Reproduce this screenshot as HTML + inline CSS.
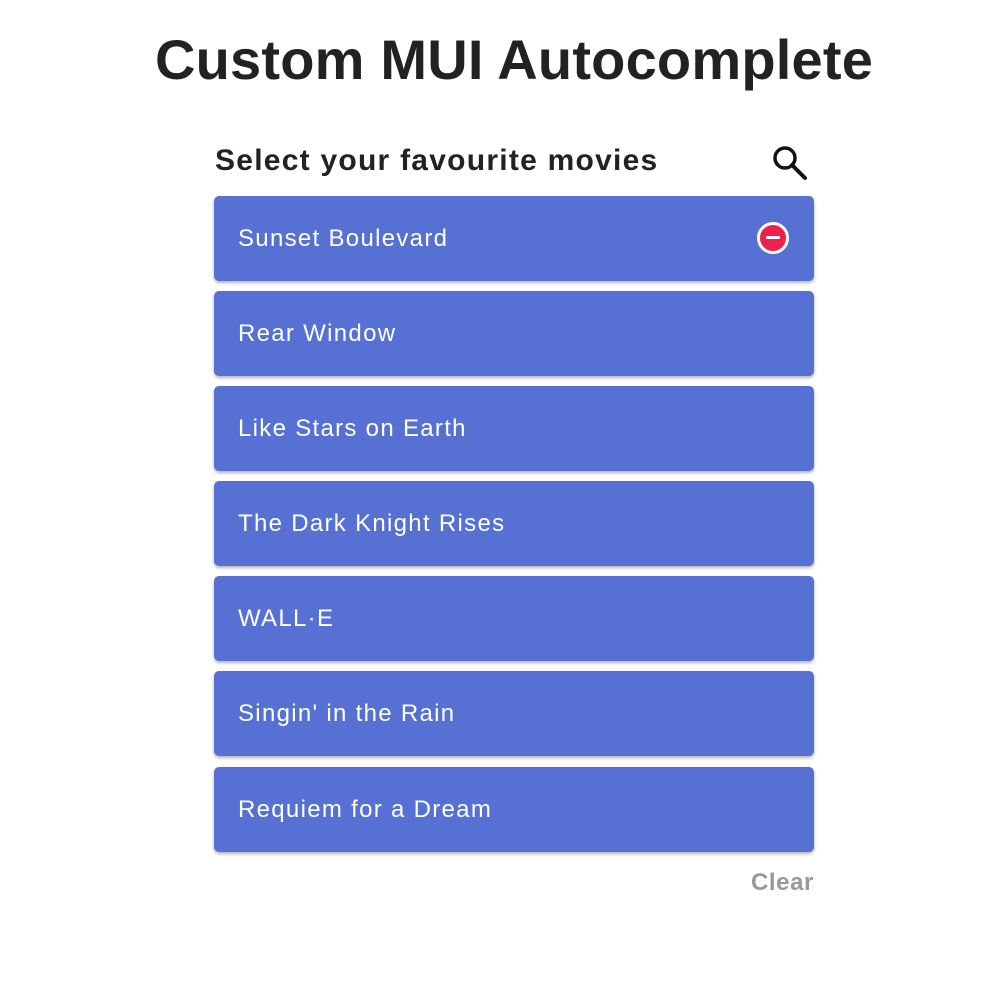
<!DOCTYPE html>
<html><head><style>
body{margin:0;width:1000px;height:1000px;background:#fff;font-family:"Liberation Sans",Arial,sans-serif;position:relative;overflow:hidden}
h1{position:absolute;top:27px;left:14px;width:1000px;margin:0;text-align:center;font-size:56px;font-weight:bold;color:#222;line-height:66px;letter-spacing:0.2px}
.label{position:absolute;left:215px;top:143px;font-size:30px;font-weight:bold;color:#222;line-height:36px;letter-spacing:1.25px}
.card{position:absolute;left:214px;width:600px;height:85px;background:#5770d3;border-radius:5px;box-shadow:0 2px 3px rgba(0,0,0,.3);color:#fff;font-size:24px;letter-spacing:1.3px;line-height:85px;box-sizing:border-box;padding-left:24px}
.rm{position:absolute;left:757px;top:222px;width:26px;height:26px;border-radius:50%;background:#ee2050;border:3px solid #fff}
.rm:after{content:"";position:absolute;left:6px;top:11px;width:14px;height:3px;background:#fff;border-radius:1px}
.clear{position:absolute;right:186px;top:869px;font-size:24px;letter-spacing:0.6px;font-weight:bold;color:#999}
</style></head><body>
<h1>Custom MUI Autocomplete</h1>
<div class="label">Select your favourite movies</div>
<svg style="position:absolute;left:770px;top:143px" width="40" height="40" viewBox="0 0 40 40"><circle cx="15" cy="15" r="10" fill="none" stroke="#111" stroke-width="3.5"/><line x1="22" y1="22" x2="35" y2="35" stroke="#111" stroke-width="4" stroke-linecap="round"/></svg>
<div class="card" style="top:196px">Sunset Boulevard</div>
<div class="rm"></div>
<div class="card" style="top:291px">Rear Window</div>
<div class="card" style="top:386px">Like Stars on Earth</div>
<div class="card" style="top:481px">The Dark Knight Rises</div>
<div class="card" style="top:576px">WALL·E</div>
<div class="card" style="top:671px">Singin' in the Rain</div>
<div class="card" style="top:767px">Requiem for a Dream</div>
<div class="clear">Clear</div>
</body></html>
